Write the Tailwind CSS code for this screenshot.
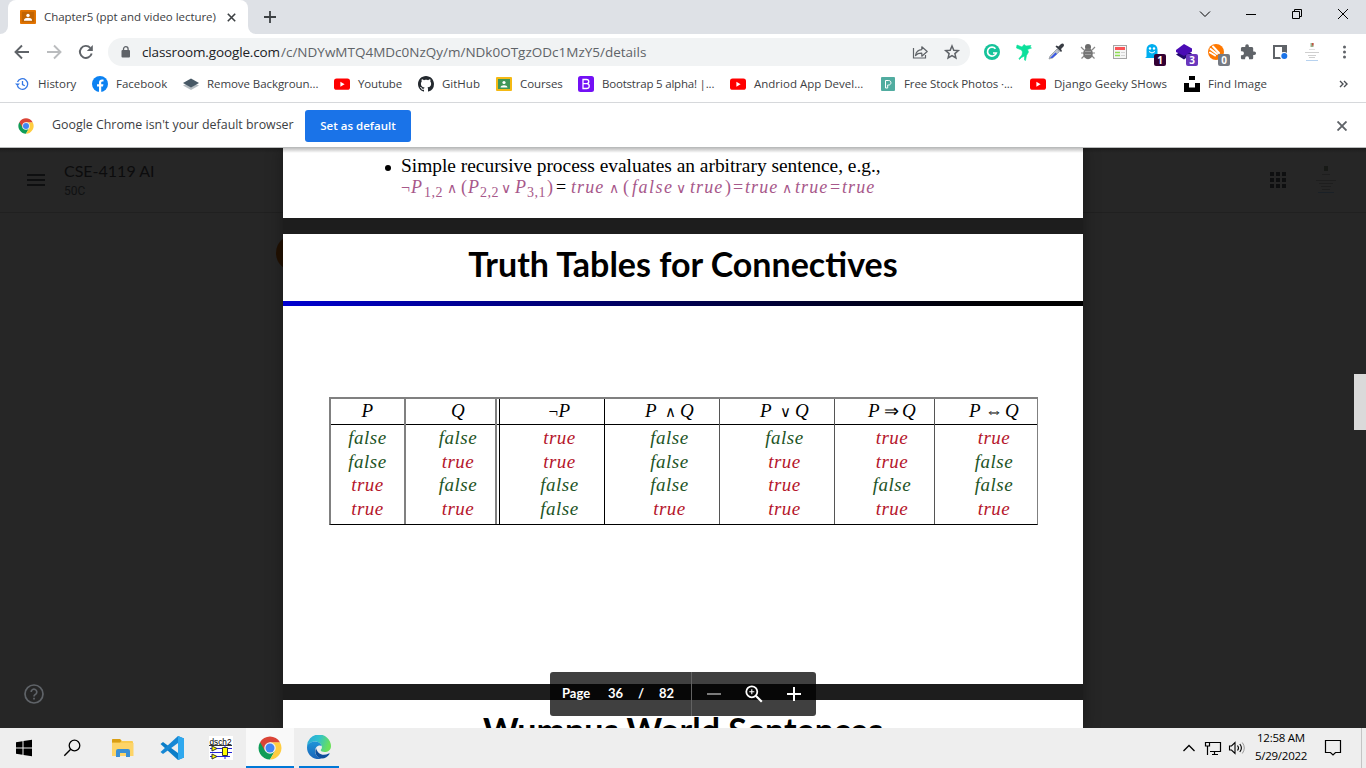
<!DOCTYPE html>
<html lang="en">
<head>
<meta charset="utf-8">
<title>Chapter5 (ppt and video lecture)</title>
<script src="https://cdn.jsdelivr.net/npm/@tailwindcss/browser@4"></script>
</head>
<body class="w-[1366px] h-[768px] overflow-hidden bg-white font-['Open_Sans','Noto_Sans',sans-serif] text-[11.5px] text-[#3c4043]">
<svg class="hidden">
  <defs>
    <symbol id="yt" viewBox="0 0 16 16"><rect y="2.500" width="16" height="11.300" rx="2.600" fill="#f00"/><path d="M6.400 5.700v5l4.200-2.500z" fill="#fff"/></symbol>
    <symbol id="chrome" viewBox="0 0 48 48"><path d="M4.100 12.500A23 23 0 0 0 24 47L34 29.500 24 24z" fill="#0f9d58"/><path d="M43.900 12.500A23 23 0 0 1 24 47L34 29.500 24 12.500z" fill="#ffcd40"/><path d="M4.100 12.500A23 23 0 0 1 43.900 12.500H24L14 29.500z" fill="#db4437"/><circle cx="24" cy="24" r="11.500" fill="#f1f1f1"/><circle cx="24" cy="24" r="9" fill="#4285f4"/></symbol>
  </defs>
</svg>
<div class="flex flex-col h-[768px]">
  <!-- Tab strip -->
  <div class="flex h-[34px] bg-[#dee1e6] items-stretch shrink-0">
    <div class="w-2 bg-white"><div class="h-full bg-[#dee1e6] rounded-br-lg"></div></div>
    <div class="w-60 bg-white rounded-t-lg flex items-center pl-3">
      <svg class="w-4 h-4 shrink-0" viewBox="0 0 16 16"><rect y="1" width="16" height="14" rx="1" fill="#e37400"/><rect x="1.800" y="2.800" width="12.400" height="10.400" fill="#c26401"/><circle cx="8" cy="6.400" r="1.700" fill="#fff"/><path d="M4 11.700v-.9c0-1.300 2.400-2 4-2s4 .7 4 2v.9z" fill="#fff"/></svg>
      <span class="ml-2 w-[172px] whitespace-nowrap tracking-[-0.04px]">Chapter5 (ppt and video lecture)</span>
      <svg class="ml-[11px] w-[9px] h-[9px]" viewBox="0 0 9 9"><path d="M.8.8l7.400 7.400M8.200.8L.8 8.200" stroke="#3c4043" stroke-width="1.600"/></svg>
    </div>
    <div class="w-2 bg-white"><div class="h-full bg-[#dee1e6] rounded-bl-lg"></div></div>
    <svg class="ml-2 w-3 h-[34px]" viewBox="0 0 12 34"><path d="M0 17h12M6 11v12" stroke="#3c4043" stroke-width="1.800"/></svg>
    <div class="ml-auto flex h-[28px] text-black">
      <svg class="w-[46px] h-7" viewBox="0 0 46 28"><path d="M18 11.500l5 5 5-5" fill="none" stroke="#000"/></svg>
      <svg class="w-[46px] h-7" viewBox="0 0 46 28"><path d="M18 14.500h10" stroke="#000"/></svg>
      <svg class="w-[46px] h-7" viewBox="0 0 46 28"><path d="M18.500 11.500h7v7h-7zM20.500 11.500v-2h7v7h-2" fill="none" stroke="#000"/></svg>
      <svg class="w-[46px] h-7" viewBox="0 0 46 28"><path d="M18 9l10 10M28 9L18 19" stroke="#000"/></svg>
    </div>
  </div>
  <!-- Address bar -->
  <div class="flex h-9 items-center shrink-0">
    <svg class="ml-3.5 w-4 h-4" viewBox="0 0 16 16"><path d="M15 8H2M8 1.500L1.500 8 8 14.500" fill="none" stroke="#5f6368" stroke-width="1.900"/></svg>
    <svg class="ml-4 w-4 h-4" viewBox="0 0 16 16"><path d="M1 8h13M8 1.500L14.500 8 8 14.500" fill="none" stroke="#babcbe" stroke-width="1.900"/></svg>
    <svg class="ml-4 w-4 h-4" viewBox="0 0 16 16"><path d="M13.700 9.500A6 6 0 1 1 12.300 3.800" fill="none" stroke="#5f6368" stroke-width="1.900"/><path d="M14.800 1v6H8.800z" fill="#5f6368"/></svg>
    <div class="ml-[14px] w-[862px] h-7 rounded-full bg-[#f1f3f4] flex items-center">
      <svg class="ml-[13px] w-[10px] h-3" viewBox="0 0 10 12"><rect x=".5" y="4" width="8.500" height="7.500" rx="1" fill="#5f6368"/><path d="M2.500 4.500V3a2.300 2.300 0 0 1 4.600 0v1.500" fill="none" stroke="#5f6368" stroke-width="1.300"/></svg>
      <div class="ml-[11px] flex text-[13.5px] whitespace-nowrap text-[#202124]"><span class="w-[139px] tracking-[-0.13px]">classroom.google.com</span><span class="text-[#5f6368]">/c/NDYwMTQ4MDc0NzQy/m/NDk0OTgzODc1MzY5/details</span></div>
      <svg class="ml-auto w-8 h-7" viewBox="0 0 32 28"><path d="M9.500 10v10h12v-3" fill="none" stroke="#5f6368" stroke-width="1.200"/><path d="M11.500 17.500c.6-4 3.200-5.800 6.300-5.900V8.800l5.400 4.700-5.400 4.700v-3c-3-.1-4.800.7-6.300 2.300z" fill="none" stroke="#5f6368" stroke-width="1.200" stroke-linejoin="round"/></svg>
      <svg class="mr-0.5 w-8 h-7" viewBox="0 0 32 28"><path d="M16 8l1.800 4.200 4.500.4-3.400 3 1 4.400-3.900-2.300L12.100 20l1-4.400-3.400-3 4.500-.4z" fill="none" stroke="#5f6368" stroke-width="1.500"/></svg>
    </div>
    <div class="ml-[6px] flex h-8">
      <svg class="w-8 h-8" viewBox="0 0 32 32"><circle cx="16" cy="16" r="8" fill="#15c39a"/><path d="M19.500 12.800A4.500 4.500 0 1 0 20.300 17H17" fill="none" stroke="#fff" stroke-width="1.700"/></svg>
      <svg class="w-8 h-8" viewBox="0 0 32 32"><path d="M9 9l5 2 2-2.500 2 1.500 5-.5-1 1.500 1.500 1-4 1.500 1 2.500-2 3.500-1 5-1-.500v-4l-3 1.500-2 2-.500-1 3-3.500.500-3-1-2-5-2z" fill="#0be09b" stroke="#0be09b" stroke-width=".6"/></svg>
      <svg class="w-8 h-8" viewBox="0 0 32 32"><path d="M9 23l1-3 7-7 2.500 2.500-7 6.500z" fill="#bcc4cf" stroke="#8a8f98" stroke-width=".7"/><path d="M10 22l5.500-5.500 1.500 1.500-4.500 4z" fill="#3656e8"/><path d="M15.500 10.500l1-1 2 1L21 8c2-1.500 4 .5 2.500 2.500L21 13l1 2-1 1z" fill="#383c44"/></svg>
      <svg class="w-8 h-8" viewBox="0 0 32 32"><path d="M9 11l3 3m11-3l-3 3M9 17h14M9.500 22.500l3-3m10 3l-3-3" stroke="#888" stroke-width="1.200"/><circle cx="16" cy="11" r="3" fill="#6a6a6a"/><ellipse cx="16" cy="17.500" rx="4.800" ry="5.700" fill="#767676"/><path d="M13 15.500h6M13 18.500h6" stroke="#a0a0a0"/></svg>
      <svg class="w-8 h-8" viewBox="0 0 32 32"><rect x="9.500" y="9.500" width="13" height="13" fill="#f6f6f6" stroke="#a5a5a5"/><path d="M11 11h10v3H11z" fill="#fa5557"/><path d="M11 16.500h5M11 19.500h5" stroke="#8edb53" stroke-width="1.500"/><path d="M17 16.500h4M17 19.500h4" stroke="#d4d4d4"/></svg>
      <svg class="w-8 h-8" viewBox="0 0 32 32"><path d="M10.500 20V13.500a5.500 5.500 0 0 1 11 0V22H9c1-.5 1.500-1 1.500-2z" fill="#00aef0"/><circle cx="14" cy="12.500" r="1.200" fill="#fff"/><circle cx="18" cy="12.500" r="1.200" fill="#fff"/><path d="M13 15.500q3 3 6 0" fill="none" stroke="#fff"/><rect x="18" y="18" width="12" height="12" rx="2" fill="#330033"/><text x="24" y="27.800" text-anchor="middle" font-size="10" font-weight="700" fill="#fff">1</text></svg>
      <svg class="w-8 h-8" viewBox="0 0 32 32"><path d="M8 18.500l8-5 8 4-8 6z" fill="#23096d"/><path d="M16 8l8 4.500v3L16 20l-8-4v-2z" fill="#4a0bb5"/><rect x="18" y="18" width="12" height="12" rx="2" fill="#6a37bd"/><text x="24" y="27.800" text-anchor="middle" font-size="10" font-weight="700" fill="#fff">3</text></svg>
      <svg class="w-8 h-8" viewBox="0 0 32 32"><circle cx="16" cy="16" r="8" fill="#ff7800"/><path d="M13 10.500l6 6.500M10.500 13l6.500 5M10 16.500l5 3" stroke="#fff" stroke-width="2" stroke-linecap="round"/><rect x="18" y="18" width="12" height="12" rx="2" fill="#777b83"/><text x="24" y="27.800" text-anchor="middle" font-size="10" font-weight="700" fill="#fff">0</text></svg>
      <svg class="w-8 h-8" viewBox="0 0 32 32"><g transform="translate(7.500 7.500) scale(.72)"><path d="M20.500 11H19V7c0-1.100-.9-2-2-2h-4V3.500a2.500 2.500 0 0 0-5 0V5H4c-1.100 0-2 .9-2 2v3.800h1.500a2.700 2.700 0 0 1 0 5.400H2V20c0 1.100.9 2 2 2h3.800v-1.500a2.700 2.700 0 0 1 5.400 0V22H17c1.100 0 2-.9 2-2v-4h1.500a2.500 2.500 0 0 0 0-5z" fill="#5f6368"/></g></svg>
      <svg class="w-8 h-8" viewBox="0 0 32 32"><path d="M9 9h14v14H9z" fill="#5f6368"/><path d="M11 11h7v10h-7z" fill="#fff"/><circle cx="20" cy="20" r="4" fill="#fff"/><circle cx="20.300" cy="20" r="3" fill="#1a73e8"/></svg>
      <svg class="w-8 h-8" viewBox="0 0 32 32"><path d="M14.500 7h3v4h-3z" fill="#9ab08b"/><path d="M16 7h1.500v2.500H16z" fill="#c94e42"/><path d="M9 16.500h14M12 19.500h8M13 21.500h6" stroke="#cfcfcf"/><path d="M13 13.500h6" stroke="#e0e0e0"/><path d="M10 24.500h12" stroke="#b7d2ef"/></svg>
      <svg class="w-8 h-8" viewBox="0 0 32 32"><g fill="#5f6368"><circle cx="16.500" cy="11" r="1.500"/><circle cx="16.500" cy="16" r="1.500"/><circle cx="16.500" cy="21" r="1.500"/></g></svg>
    </div>
  </div>
  <!-- Bookmarks bar -->
  <div class="h-[33px] pb-1 border-b border-[#d6d8db] flex items-center gap-4 pl-[14px] pr-[18px] whitespace-nowrap shrink-0">
    <div class="flex items-center gap-2"><svg class="w-4 h-4" viewBox="0 0 16 16"><path d="M3.500 6A5.300 5.300 0 1 1 3.300 9.500M8.500 5v3.500l2.300 1.300" fill="none" stroke="#3578e5" stroke-width="1.300"/><path d="M1 7.500h5L3.500 10z" fill="#3578e5"/></svg><span class="w-[38px]">History</span></div>
    <div class="flex items-center gap-2"><svg class="w-4 h-4" viewBox="0 0 16 16"><circle cx="8" cy="8" r="8" fill="#0c82f2"/><path d="M7 16v-5.500H5V8.200h2V6.500c0-2 1.200-3.100 3-3.100l1.500.1v2h-1c-1 0-1.300.6-1.300 1.300v1.400h2.200l-.4 2.300H9.200V16z" fill="#fff"/></svg><span class="w-[51px]">Facebook</span></div>
    <div class="flex items-center gap-2"><svg class="w-4 h-4" viewBox="0 0 16 16"><path d="M0 9.500L8 6l8 3.500L8 14z" fill="#b5bcc1"/><path d="M0 7l8-4.500L16 7l-8 4.500z" fill="#475865"/></svg><span class="w-[111px] tracking-[-0.07px]">Remove Backgroun...</span></div>
    <div class="flex items-center gap-2"><svg class="w-4 h-4"><use href="#yt"/></svg><span class="w-11 tracking-[-0.15px]">Youtube</span></div>
    <div class="flex items-center gap-2"><svg class="w-4 h-4" viewBox="0 0 16 16"><path fill="#24292f" d="M8 0C3.580 0 0 3.580 0 8c0 3.540 2.290 6.530 5.470 7.590.4.070.55-.17.55-.38 0-.19-.01-.82-.01-1.490-2.010.37-2.530-.49-2.690-.94-.09-.23-.48-.94-.82-1.130-.28-.15-.68-.52-.01-.53.63-.01 1.080.58 1.230.82.72 1.210 1.870.87 2.330.66.07-.52.28-.87.51-1.070-1.780-.2-3.640-.89-3.640-3.950 0-.87.31-1.590.82-2.150-.08-.2-.36-1.020.08-2.120 0 0 .67-.21 2.200.82.64-.18 1.320-.27 2-.27s1.360.09 2 .27c1.530-1.040 2.200-.82 2.200-.82.44 1.100.16 1.920.08 2.120.51.56.82 1.270.82 2.150 0 3.070-1.870 3.750-3.650 3.950.29.25.54.73.54 1.480 0 1.070-.01 1.930-.01 2.200 0 .21.15.46.55.38A8.010 8.010 0 0 0 16 8c0-4.420-3.580-8-8-8z"/></svg><span class="w-[38px]">GitHub</span></div>
    <div class="flex items-center gap-2"><svg class="w-4 h-4" viewBox="0 0 16 16"><rect y="1" width="16" height="14" rx="1" fill="#f4b914"/><path d="M2 3h12v10H2z" fill="#3f9657"/><circle cx="8" cy="6.500" r="1.600" fill="#fff"/><path d="M4.500 11.500c.2-3 6.800-3 7 0z" fill="#fff"/></svg><span class="w-[42px] tracking-[-0.1px]">Courses</span></div>
    <div class="flex items-center gap-2"><svg class="w-4 h-4" viewBox="0 0 16 16"><rect width="16" height="16" rx="2.500" fill="#7310f5"/><path d="M5 3.500h3.500c3 0 3 4 .3 4.200 3.400.2 3.200 4.800-.3 4.800H5zM5 7.700h4" fill="none" stroke="#fff" stroke-width="1.300"/></svg><span class="w-[112px] tracking-[-0.2px]">Bootstrap 5 alpha! |...</span></div>
    <div class="flex items-center gap-2"><svg class="w-4 h-4"><use href="#yt"/></svg><span class="w-[110px]">Andriod App Devel...</span></div>
    <div class="flex items-center gap-2"><svg class="w-4 h-4" viewBox="0 0 16 16"><rect x="1" y="1" width="14" height="14" rx="1" fill="#51aca0"/><path d="M5.500 12V4.500h3.200c3 0 3 4.500 0 4.500h-1v3z" fill="none" stroke="#fff"/></svg><span class="w-[110px] tracking-[-0.1px]">Free Stock Photos ·...</span></div>
    <div class="flex items-center gap-2"><svg class="w-4 h-4"><use href="#yt"/></svg><span class="w-[114px]">Django Geeky SHows</span></div>
    <div class="flex items-center gap-2"><svg class="w-4 h-4" viewBox="0 0 16 16"><path d="M5 0h6v4H5zM0 7h5v4.500h6V7h5v9H0z" fill="#000"/></svg><span class="w-[60px]">Find Image</span></div>
    <svg class="ml-auto w-[9px] h-2" viewBox="0 0 9 8"><path d="M1 1l3 3-3 3M5 1l3 3-3 3" fill="none" stroke="#4b4f54" stroke-width="1.400"/></svg>
  </div>
  <!-- Default-browser notice -->
  <div class="h-[45px] border-b border-[#b9bbbb] flex items-center pl-[18px] pr-[19px] whitespace-nowrap shrink-0">
    <svg class="w-4 h-4 mt-px"><use href="#chrome"/></svg>
    <span class="ml-[18px] w-[253px] pt-px text-[12.4px]">Google Chrome isn't your default browser</span>
    <button class="w-[106px] h-8 mt-px rounded-[3px] bg-[#1a73e8] text-white font-semibold">Set as default</button>
    <svg class="ml-auto w-[10px] h-[10px] mt-px" viewBox="0 0 10 10"><path d="M.5.5l9 9M9.500.5l-9 9" stroke="#5f6368" stroke-width="1.900"/></svg>
  </div>
  <!-- Classroom page with document viewer -->
  <div class="relative h-[580px] bg-[#262626] overflow-hidden shrink-0">
    <div class="h-full flex flex-col">
      <div class="h-[65px] border-b border-[#202020] flex items-center px-[27px]">
        <svg class="w-[18px] h-3" viewBox="0 0 18 12"><path d="M0 1h18M0 6h18M0 11h18" stroke="#0e0f10" stroke-width="2"/></svg>
        <div class="ml-[19px] pt-px text-[#0c0c0d]"><div class="text-[16px] leading-5 font-['Lato',sans-serif]">CSE-4119 AI</div><div class="text-[12px] leading-5 font-['Roboto',sans-serif] text-[#101112]">50C</div></div>
        <svg class="ml-auto w-4 h-4" viewBox="0 0 16 16"><path d="M0 0h4v4H0zM6 0h4v4H6zM12 0h4v4h-4zM0 6h4v4H0zM6 6h4v4H6zM12 6h4v4h-4zM0 12h4v4H0zM6 12h4v4H6zM12 12h4v4h-4z" fill="#0e0f10"/></svg>
        <svg class="ml-[29px] mr-[2px] w-[22px] h-7" viewBox="0 0 22 28"><path d="M9 0h4v5H9z" fill="#171916"/><path d="M7 8.500h8M1 14.500h20M4 17.500h14M6 20.500h10M7 23.500h8" stroke="#1e1e1e"/><path d="M3 26.500h16" stroke="#1a2026"/></svg>
      </div>
      <div class="pl-[276px] pt-[22px]"><div class="w-9 h-9 rounded-full bg-[#221102]"></div></div>
      <svg class="mt-auto ml-6 mb-6 w-5 h-5" viewBox="0 0 20 20"><circle cx="10" cy="10" r="9" fill="none" stroke="#5f6368" stroke-width="1.700"/><path d="M7.200 8a2.800 2.800 0 1 1 4.600 2.100c-1 .8-1.800 1.200-1.800 2.400" fill="none" stroke="#5f6368" stroke-width="1.700"/><path d="M9.100 13.800h1.800v1.800H9.100z" fill="#5f6368"/></svg>
    </div>
    <!-- Slides lie over the dimmed page -->
    <div class="absolute top-0 left-[283px] w-[800px] flex flex-col gap-4 text-black shadow-[0_0_16px_rgba(0,0,0,0.35)] bg-[#1d1d1d]">
      <section class="h-[70px] bg-white pt-[7px] pl-[101px] font-['Liberation_Serif',serif] whitespace-nowrap">
        <div class="flex items-center h-[22px] text-[19.4px]"><i class="w-[6px] h-[6px] rounded-full bg-black ml-px mr-[10px] mt-[3px]"></i><span>Simple recursive process evaluates an arbitrary sentence, e.g.,</span></div>
        <div class="flex items-baseline pl-[17px] h-5 leading-5 text-[18px] text-[#a7588a]">
          <span class="w-[10px] text-[16px]">¬</span><i class="w-[13px]">P</i><span class="w-[23px] text-[14px] relative top-[4px] tracking-[0.5px]">1,2</span><span class="w-[14px] text-[14px]">∧</span><span class="w-[7px]">(</span><i class="w-[12px]">P</i><span class="w-[21px] text-[14px] relative top-[4px] tracking-[0.5px]">2,2</span><span class="w-[14px] text-[14px]">∨</span><i class="w-[12px]">P</i><span class="w-[20px] text-[14px] relative top-[4px] tracking-[0.5px]">3,1</span><span class="w-[9px]">)</span><span class="w-[15px] text-black">=</span><i class="w-[38px] tracking-[1.1px]">true</i><span class="w-[14px] text-[14px]">∧</span><span class="w-[9px]">(</span><i class="w-[44px] tracking-[1.5px]">false</i><span class="w-[14px] text-[14px]">∨</span><i class="w-[35px] tracking-[1.1px]">true</i><span class="w-[8px]">)</span><span class="w-[12px]">=</span><i class="w-[37px] tracking-[1.1px]">true</i><span class="w-[13px] text-[14px]">∧</span><i class="w-[35px] tracking-[1.1px]">true</i><span class="w-[12px]">=</span><i class="w-[35px] tracking-[1.1px]">true</i>
        </div>
      </section>
      <section class="h-[450px] bg-white flex flex-col">
        <h1 class="h-[67px] pt-[5px] leading-[50px] text-center text-[34px] font-bold font-['Lato',sans-serif] whitespace-nowrap">Truth Tables for Connectives</h1>
        <div class="h-[5px] bg-linear-to-r from-[#0000d0] to-black"></div>
        <div class="mt-[91px] ml-[46px] w-[709px] h-[128px] flex border-l-2 border-r border-t-2 border-[#808080] border-b-[1px] border-b-black text-[19px] text-center leading-[23.7px] font-['Liberation_Serif',serif] italic text-[#1d5426] tracking-[0.5px]">
          <div class="w-[75px] border-r-2 border-[#808080]"><div class="h-[26px] leading-[24px] border-b border-black text-black">P</div><div class="pt-[1px]">false<br>false<br><span class="text-[#b5162c]">true<br>true</span></div></div>
          <div class="w-[91px] border-r-2 border-[#808080]"><div class="h-[26px] pl-[15px] leading-[24px] border-b border-black text-black">Q</div><div class="pt-[1px] pl-[15px]">false<br><span class="text-[#b5162c]">true</span><br>false<br><span class="text-[#b5162c]">true</span></div></div>
          <div class="w-[2px]"><div class="h-[26px] border-b border-black"></div></div>
          <div class="w-[106px] border-x border-black"><div class="h-[26px] pl-[15px] leading-[24px] border-b border-black text-black"><span class="not-italic text-[17px]">¬</span>P</div><div class="pt-[1px] pl-[15px]"><span class="text-[#b5162c]">true<br>true</span><br>false<br>false</div></div>
          <div class="w-[115px] border-r border-[#555]"><div class="h-[26px] pl-[15px] leading-[24px] border-b border-black text-black flex justify-center items-baseline"><i class="w-[20px] text-left">P</i><span class="w-[15px] text-left text-[15px] not-italic">∧</span><i>Q</i></div><div class="pt-[1px] pl-[15px]">false<br>false<br>false<br><span class="text-[#b5162c]">true</span></div></div>
          <div class="w-[115px] border-r border-[#555]"><div class="h-[26px] pl-[15px] leading-[24px] border-b border-black text-black flex justify-center items-baseline"><i class="w-[20px] text-left">P</i><span class="w-[15px] text-left text-[15px] not-italic">∨</span><i>Q</i></div><div class="pt-[1px] pl-[15px]">false<br><span class="text-[#b5162c]">true<br>true<br>true</span></div></div>
          <div class="w-[100px] border-r border-[#555]"><div class="h-[26px] pl-[15px] leading-[24px] border-b border-black text-black flex justify-center items-baseline"><i class="w-[14px] text-left">P</i><span class="w-[20px] text-center text-[18px] not-italic">⇒</span><i>Q</i></div><div class="pt-[1px] pl-[15px]"><span class="text-[#b5162c]">true<br>true</span><br>false<br><span class="text-[#b5162c]">true</span></div></div>
          <div class="flex-1"><div class="h-[26px] pl-[16px] leading-[24px] border-b border-black text-black flex justify-center items-baseline"><i class="w-[14px] text-left">P</i><span class="w-[22px] text-center text-[18px] not-italic">⇔</span><i>Q</i></div><div class="pt-[1px] pl-[16px]"><span class="text-[#b5162c]">true</span><br>false<br>false<br><span class="text-[#b5162c]">true</span></div></div>
        </div>
      </section>
      <section class="h-7 bg-white overflow-hidden text-center"><h1 class="pt-[5px] leading-[50px] text-[34px] font-bold font-['Lato',sans-serif] whitespace-nowrap">Wumpus World Sentences</h1></section>
    </div>
    <div class="absolute inset-x-0 top-0 h-[5px] bg-linear-to-b from-black/25 to-transparent"></div>
    <div class="absolute right-0 top-[226px] w-3 h-14 bg-[#dadada]"></div>
    <!-- Page and zoom controls -->
    <div class="absolute left-[550px] top-[524px] w-[266px] h-11 rounded-[3px] bg-black/75 text-white flex items-center font-['Lato',sans-serif] text-[13px] font-bold">
      <span class="ml-3 w-[46px]">Page</span><span class="w-[30px]">36</span><span class="w-[21px]">/</span><span class="w-[32px]">82</span>
      <div class="w-px h-11 bg-[#626262]"></div>
      <svg class="ml-[14px] w-4 h-4" viewBox="0 0 16 16"><path d="M1 8h14" stroke="#8a8a8a" stroke-width="1.800"/></svg>
      <svg class="ml-[23px] w-[18px] h-[18px]" viewBox="0 0 18 18"><circle cx="6.800" cy="6.800" r="5.500" fill="none" stroke="#fff" stroke-width="1.800"/><path d="M10.800 10.800l6 6" stroke="#fff" stroke-width="2.200"/><path d="M4.300 6.800h5M6.800 4.300v5" stroke="#fff" stroke-width="1.100"/></svg>
      <svg class="ml-[24px] w-[14px] h-[14px]" viewBox="0 0 14 14"><path d="M0 7h14M7 0v14" stroke="#fff" stroke-width="2"/></svg>
    </div>
  </div>
  <!-- Taskbar -->
  <div class="h-10 bg-[#eee] flex shrink-0 text-black">
    <svg class="w-12 h-10" viewBox="0 0 48 40"><path d="M16 14.200l6.500-1v6.300H16zM23.500 13l8.500-1.200v7.700h-8.500zM16 20.500h6.500v6.300l-6.500-1zM23.500 20.500H32v7.700L23.500 27z"/></svg>
    <svg class="w-12 h-10" viewBox="0 0 48 40"><circle cx="26.500" cy="17.500" r="5.300" fill="none" stroke="#000" stroke-width="1.300"/><path d="M22.700 21.300L16.300 27.700" stroke="#000" stroke-width="1.400"/></svg>
    <svg class="ml-[2px] w-12 h-10" viewBox="0 0 48 40"><path d="M14 12q0-1 1-1h7l2 2h10q1 0 1 1v14H14z" fill="#f9cb50"/><path d="M14 12q0-1 1-1h7l1.500 2-1.500 1.500h-8z" fill="#d99e14"/><path d="M14 15h21.500v13H14z" fill="#fdd468"/><path d="M18 29v-6q0-2 2-2h10q2 0 2 2v6h-4v-4h-6v4z" fill="#3a8fd4"/></svg>
    <svg class="ml-px w-12 h-10" viewBox="0 0 48 40"><path d="M31 8l6 2.500v19L31 32 13.500 16l2.500-2 15 11z" fill="#0a7dc8"/><path d="M31 8v7L16 26l-2.500-2z" fill="#1687d4"/><path d="M31 8l6 2.500v19L31 32z" fill="#2fa8ee"/></svg>
    <svg class="ml-[2px] w-12 h-10" viewBox="0 0 48 40"><path d="M12 8h24v24H12z" fill="#fff"/><text x="12.500" y="16.500" font-size="9" textLength="22" lengthAdjust="spacingAndGlyphs" font-family="Liberation Sans">dsch2</text><path d="M12 17.500h23" stroke="#333"/><path d="M13 20.500h22M13 24.500h22M13 28.500h20M28 17v14" stroke="#2222d8"/><path d="M15 18l5 2.500-5 2.500zM15 26l5 2.500-5 2.500zM25.500 19.500h5v8h-5z" fill="#ff0" stroke="#333"/></svg>
    <div class="ml-px w-12 h-10 bg-[#f9f9f9] border-b-2 border-[#0078d7] pt-2 pl-[12px]"><svg class="w-6 h-6"><use href="#chrome"/></svg></div>
    <div class="ml-[5px] w-10 h-10 border-b-2 border-[#0078d7] pt-[7px] pl-2"><svg class="w-6 h-6" viewBox="0 0 24 24"><defs><linearGradient id="ea" x1="0" y1="0" x2="1" y2=".3"><stop offset="0" stop-color="#2aa6d8"/><stop offset=".5" stop-color="#2fc0cf"/><stop offset="1" stop-color="#6ae05a"/></linearGradient><linearGradient id="eb" x1="0" y1="0" x2="0" y2="1"><stop offset="0" stop-color="#1e95d8"/><stop offset="1" stop-color="#1a63b8"/></linearGradient></defs><path d="M0 12A12 12 0 0 1 24 11c0 4-3 6-6.500 6-2.500 0-4.500-1-3.500-2.500 1-1.200 1-2 .8-3C14 8 11 6.500 8 6.500 4 6.500 1 9 0 12z" fill="url(#ea)"/><path d="M0 12.500C0 9 4 6.500 8 6.500c3.500 0 6 2 6.700 4.500C13 9.500 8 11 8 16c0 4 3 6.500 6.500 7.500C7 26 0 20 0 12.500z" fill="url(#eb)"/><path d="M9 13c-2.500 6 2 10.500 6 10.500 3 0 6-2 7.500-4.500.3-.6-.2-.8-.7-.5-6 3-11.300.5-12.800-5.500z" fill="#0f4f9c"/></svg></div>
    <div class="ml-auto flex items-center">
      <svg class="w-6 h-10" viewBox="0 0 24 40"><path d="M6.500 23l5.500-5.500 5.500 5.500" fill="none" stroke="#000" stroke-width="1.300"/></svg>
      <svg class="w-6 h-10" viewBox="0 0 24 40"><path d="M9 14.500h10.500v9H9M11 26.500h6M13.500 23.500v3M6.500 18v9" fill="none" stroke="#000" stroke-width="1.200"/><path d="M4.500 14.500h4v3.500h-4z" fill="none" stroke="#000" stroke-width="1.200"/></svg>
      <svg class="w-6 h-10" viewBox="0 0 24 40"><path d="M4.500 18h2l3.500-3.500v11L6.500 22h-2z" fill="none" stroke="#000" stroke-width="1.100"/><path d="M12.500 17.500q2 2.500 0 5M14.800 16q3.200 4 0 8" fill="none" stroke="#000" stroke-width="1.100"/><path d="M17.300 14.500q4 5.500 0 11" fill="none" stroke="#999"/></svg>
      <div class="ml-1 w-[56px] text-center leading-[18px] whitespace-nowrap tracking-[-0.25px] pb-0.5"><div>12:58 AM</div><div>5/29/2022</div></div>
      <svg class="ml-3 w-6 h-10" viewBox="0 0 24 40"><path d="M4.500 12.500h15v12h-5l-2.500 2.500-2.500-2.500h-5z" fill="none" stroke="#000" stroke-width="1.200"/></svg>
      <div class="ml-4 mr-1 w-px h-10 bg-[#c4c4c4]"></div>
    </div>
  </div>
</div>
</body>
</html>
